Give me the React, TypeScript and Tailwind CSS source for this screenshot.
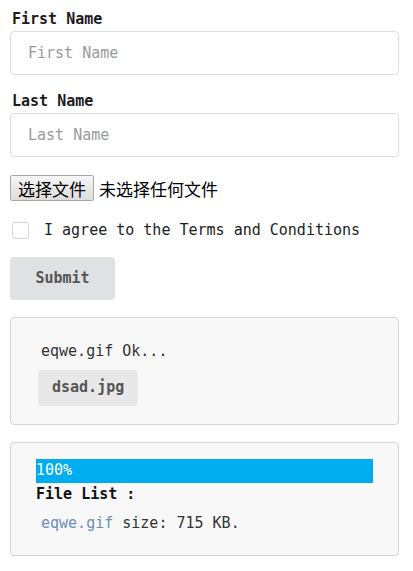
import React from 'react'

const mono = { fontFamily: '"DejaVu Sans Mono", "Liberation Mono", monospace' }

export default function App() {
  return (
    <div className="w-[413px] bg-white px-[10px] pt-[10px] text-[15px] text-[#222]" style={mono}>
      {/* first name */}
      <label className="block pl-[2px] text-[15px] font-bold leading-[18px] text-[#1b1c1d]">First Name</label>
      <input
        className="mt-[3px] block h-[44px] w-[389px] rounded-[4px] border border-[#dedede] px-[17px] text-[15px] outline-none placeholder:text-[#9a9a9a]"
        placeholder="First Name"
      />

      {/* last name */}
      <label className="mt-[17px] block pl-[2px] text-[15px] font-bold leading-[18px] text-[#1b1c1d]">Last Name</label>
      <input
        className="mt-[3px] block h-[44px] w-[389px] rounded-[4px] border border-[#dedede] px-[17px] text-[15px] outline-none placeholder:text-[#9a9a9a]"
        placeholder="Last Name"
      />

      {/* file chooser */}
      <div
        className="mt-[18px] flex h-[26px] items-center text-[17px] text-black"
        style={{ fontFamily: '"Noto Sans CJK SC", sans-serif' }}
      >
        <button className="h-[26px] rounded-[2px] border border-[#a9a9a9] bg-gradient-to-b from-[#f6f6f6] to-[#dddddd] px-[7px] leading-none">
          选择文件
        </button>
        <span className="ml-[5px] leading-none">未选择任何文件</span>
      </div>

      {/* terms */}
      <div className="mt-[18px] flex items-center">
        <span className="ml-[2px] block h-[17px] w-[17px] rounded-[3px] border border-[#d4d4d5] bg-white" />
        <span className="ml-[15px] text-[15px] text-[#222]">I agree to the Terms and Conditions</span>
      </div>

      {/* submit */}
      <button className="mt-[15px] h-[43px] w-[105px] rounded-[4px] bg-[#e0e1e2] text-[15px] font-bold text-[#555]">
        Submit
      </button>

      {/* upload status */}
      <div className="mt-[17px] h-[108px] w-[389px] rounded-[4px] border border-[#d4d4d5] bg-[#f8f8f9] pl-[30px] pt-[23px]">
        <div className="text-[15px] leading-[20px] text-[#333]">eqwe.gif Ok...</div>
        <div className="ml-[-3px] mt-[9px] inline-flex h-[36px] items-center rounded-[3px] bg-[#e8e8e8] px-[14px] text-[15px] font-bold text-[#555]">
          dsad.jpg
        </div>
      </div>

      {/* file list */}
      <div className="mt-[17px] h-[114px] w-[389px] rounded-[4px] border border-[#d4d4d5] bg-[#f8f8f9] pl-[25px] pt-[16px]">
        <div className="flex h-[24px] w-[337px] items-center bg-[#00aeef] text-[15px] text-white">100%</div>
        <div className="mt-[1px] text-[15px] font-bold leading-[20px] text-[#111]">File List :</div>
        <div className="mt-[9px] pl-[5px] text-[15px] leading-[20px] text-[#333]">
          <span className="text-[#6c8fb3]">eqwe.gif</span> size: 715 KB.
        </div>
      </div>
    </div>
  )
}
